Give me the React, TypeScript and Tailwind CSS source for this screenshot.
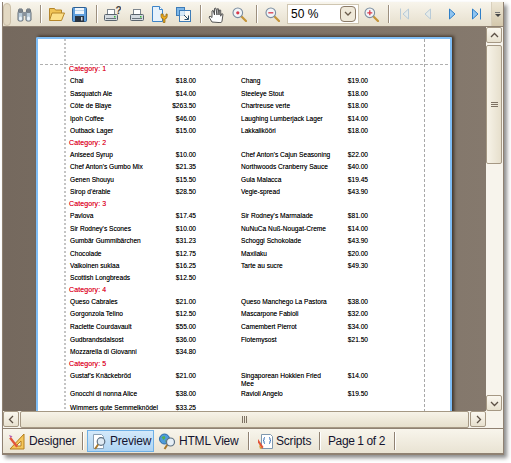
const font = { fontFamily: '"Liberation Sans", Arial, sans-serif' };

type Row = { top: number; a?: [string, string]; b?: [string, string]; cat?: string };

// row heights vary a little in the picture, so each row carries its own
const rows: Row[] = [
  { top: 12, cat: 'Category: 1' },
  { top: 13, a: ['Chai', '$18.00'], b: ['Chang', '$19.00'] },
  { top: 12, a: ['Sasquatch Ale', '$14.00'], b: ['Steeleye Stout', '$18.00'] },
  { top: 13, a: ['Côte de Blaye', '$263.50'], b: ['Chartreuse verte', '$18.00'] },
  { top: 12, a: ['Ipoh Coffee', '$46.00'], b: ['Laughing Lumberjack Lager', '$14.00'] },
  { top: 12, a: ['Outback Lager', '$15.00'], b: ['Lakkalikööri', '$18.00'] },
  { top: 12, cat: 'Category: 2' },
  { top: 12, a: ['Aniseed Syrup', '$10.00'], b: ["Chef Anton's Cajun Seasoning", '$22.00'] },
  { top: 13, a: ["Chef Anton's Gumbo Mix", '$21.35'], b: ['Northwoods Cranberry Sauce', '$40.00'] },
  { top: 12, a: ['Genen Shouyu', '$15.50'], b: ['Gula Malacca', '$19.45'] },
  { top: 12, a: ["Sirop d'érable", '$28.50'], b: ['Vegie-spread', '$43.90'] },
  { top: 12, cat: 'Category: 3' },
  { top: 13, a: ['Pavlova', '$17.45'], b: ["Sir Rodney's Marmalade", '$81.00'] },
  { top: 12, a: ["Sir Rodney's Scones", '$10.00'], b: ['NuNuCa Nuß-Nougat-Creme', '$14.00'] },
  { top: 13, a: ['Gumbär Gummibärchen', '$31.23'], b: ['Schoggi Schokolade', '$43.90'] },
  { top: 12, a: ['Chocolade', '$12.75'], b: ['Maxilaku', '$20.00'] },
  { top: 12, a: ['Valkoinen suklaa', '$16.25'], b: ['Tarte au sucre', '$49.30'] },
  { top: 12, a: ['Scottish Longbreads', '$12.50'] },
  { top: 12, cat: 'Category: 4' },
  { top: 12, a: ['Queso Cabrales', '$21.00'], b: ['Queso Manchego La Pastora', '$38.00'] },
  { top: 13, a: ['Gorgonzola Telino', '$12.50'], b: ['Mascarpone Fabioli', '$32.00'] },
  { top: 13, a: ['Raclette Courdavault', '$55.00'], b: ['Camembert Pierrot', '$34.00'] },
  { top: 12, a: ['Gudbrandsdalsost', '$36.00'], b: ['Flotemysost', '$21.50'] },
  { top: 12, a: ['Mozzarella di Giovanni', '$34.80'] },
  { top: 12, cat: 'Category: 5' },
  { top: 18, a: ["Gustaf's Knäckebröd", '$21.00'], b: ['Singaporean Hokkien Fried Mee', '$14.00'] },
  { top: 14, a: ['Gnocchi di nonna Alice', '$38.00'], b: ['Ravioli Angelo', '$19.50'] },
  { top: 12, a: ['Wimmers gute Semmelknödel', '$33.25'] },
];

function Sep() {
  return <div className="w-px h-[18px] mx-[4px] bg-[#9c8f7e] border-r border-white box-content shrink-0" />;
}

function Btn({ children, w = 26 }: { children: React.ReactNode; w?: number }) {
  return (
    <div className="flex items-center justify-center h-[22px] shrink-0" style={{ width: w }}>
      {children}
    </div>
  );
}

function Binoculars() {
  return (
    <svg width="15" height="15" viewBox="0 0 15 15">
      <path d="M1 13V6l1-4h3l1 4v7a1.500 1.500 0 0 1-1.500 1h-2A1.500 1.500 0 0 1 1 13z" fill="#b9cbd9" stroke="#626c76" />
      <path d="M9 13V6l1-4h3l1 4v7a1.500 1.500 0 0 1-1.500 1h-2A1.500 1.500 0 0 1 9 13z" fill="#b9cbd9" stroke="#626c76" />
      <rect x="2" y="2" width="3" height="4" fill="#7a838c" />
      <rect x="10" y="2" width="3" height="4" fill="#7a838c" />
      <rect x="6" y="5" width="3" height="4" fill="#8a939c" />
      <ellipse cx="3.500" cy="11.500" rx="1.500" ry="2" fill="#eaf3fa" />
      <ellipse cx="11.500" cy="11.500" rx="1.500" ry="2" fill="#eaf3fa" />
    </svg>
  );
}

function Folder() {
  return (
    <svg width="17" height="15" viewBox="0 0 17 15">
      <path d="M1.500 13V1.500h5l1 1.500h6V6" fill="#f0c355" stroke="#b5862a" />
      <path d="M1.500 13.500L4 6h12.500l-3 7.500z" fill="#fce08a" stroke="#b5862a" />
    </svg>
  );
}

function Floppy() {
  return (
    <svg width="15" height="15" viewBox="0 0 15 15">
      <rect x=".500" y=".500" width="14" height="14" rx="1" fill="#5f9fdc" stroke="#2d5f93" />
      <rect x="3" y="1" width="9" height="6" fill="#eef5fb" />
      <rect x="3" y="3" width="9" height="1" fill="#b9d4ea" />
      <rect x="3" y="9" width="9" height="6" fill="#2a3440" />
      <rect x="9" y="10" width="1.500" height="3.500" fill="#cfd8df" />
    </svg>
  );
}

function Printer({ q }: { q?: boolean }) {
  return (
    <svg width={q ? 17 : 14} height="16" viewBox={q ? '0 0 17 16' : '0 0 14 16'}>
      <rect x="3.500" y="3.500" width="7" height="6" fill="#fff" stroke="#7d868e" />
      <rect x=".500" y="8.500" width="13" height="6" rx="1" fill="#d5dbe0" stroke="#59636c" />
      <rect x="2" y="12" width="10" height="1" fill="#6a747d" />
      <rect x="10" y="10" width="1.500" height="1.500" fill="#35b935" />
      {q && <text x="11.500" y="8" fontSize="10" fontWeight="700" fill="#444" style={font}>?</text>}
    </svg>
  );
}

function PageSetup() {
  return (
    <svg width="17" height="17" viewBox="0 0 17 17">
      <path d="M.500 .500h7l3 3v12h-10z" fill="#e6f2fc" stroke="#3e84c8" />
      <path d="M7.500 .500v3h3" fill="#fff" stroke="#3e84c8" />
      <path d="M9 8v2.500a2.500 2.500 0 0 0 2.200 2.400V16.500h1.800v-3.600a2.500 2.500 0 0 0 2.200-2.400V8h-1.200v2.200h-2.800V8z" fill="#eeaa1c" stroke="#8c6410" strokeWidth=".7" />
    </svg>
  );
}

function Export() {
  return (
    <svg width="15" height="15" viewBox="0 0 15 15">
      <rect x=".500" y=".500" width="8" height="8" fill="#7db7e8" stroke="#3e7cb8" />
      <rect x="3.500" y="3.500" width="11" height="11" fill="#fff" fillOpacity=".7" stroke="#3e7cb8" />
      <path d="M8 8l4 4M12.500 8.500v4H8.500" fill="none" stroke="#2b4b66" />
    </svg>
  );
}

function Hand() {
  return (
    <svg width="17" height="17" viewBox="0 0 17 17">
      <path
        d="M4 16l-3-5 1-1 2 1.500V5l1.200-.6L6.500 9V2.500l1.300-.5L9 9V3l1.300-.3.7 6.300.4-5 1.300.2v6l1-2.500 1.300.5-1 7-1 1.500z"
        fill="#fff"
        stroke="#444"
        strokeWidth=".9"
      />
    </svg>
  );
}

function Zoom({ sign }: { sign?: 'plus' | 'minus' | 'dot' }) {
  return (
    <svg width="15" height="15" viewBox="0 0 15 15">
      <path d="M9.500 9.500l4.500 4.500" stroke="#c49438" strokeWidth="2.200" strokeLinecap="round" />
      <circle cx="5.800" cy="5.800" r="4.800" fill="#f1f5f8" stroke="#7b8da0" strokeWidth="1.100" />
      {sign === 'dot' && <circle cx="5.800" cy="5.800" r="1.600" fill="#d93a4a" />}
      {sign === 'minus' && <path d="M3.300 5.800h5" stroke="#d93a4a" strokeWidth="1.300" />}
      {sign === 'plus' && <path d="M3.300 5.800h5M5.800 3.300v5" stroke="#d93a4a" strokeWidth="1.300" />}
    </svg>
  );
}

function Nav({ dir, bar, dim }: { dir: 'l' | 'r'; bar?: boolean; dim?: boolean }) {
  const stroke = dim ? '#b8cbd8' : '#2f7fc8';
  const fill = dim ? '#e6ebe8' : '#8fc4f0';
  return (
    <svg width="10" height="12" viewBox="0 0 10 12">
      {dir === 'l' ? (
        <>
          <path d="M8.500 1v10L3 6z" fill={fill} stroke={stroke} />
          {bar && <path d="M.500 .500v11" stroke={stroke} />}
        </>
      ) : (
        <>
          <path d="M1.500 1v10L7 6z" fill={fill} stroke={stroke} />
          {bar && <path d="M9.500 .500v11" stroke={stroke} />}
        </>
      )}
    </svg>
  );
}

function Toolbar() {
  return (
    <div className="flex items-center h-[25px] bg-gradient-to-b from-[#f8f5ec] to-[#e6dfcd] border-b border-[#8f8172]">
      <div className="w-[8px] h-[23px] mr-px rounded-sm border border-[#cbbfa8] bg-[#e3d9c3] shrink-0" />
      <Btn w={24}><Binoculars /></Btn>
      <Sep />
      <Btn w={20}><Folder /></Btn>
      <Btn w={26}><Floppy /></Btn>
      <Sep />
      <Btn w={20}><Printer q /></Btn>
      <Btn w={29}><Printer /></Btn>
      <Btn w={19}><PageSetup /></Btn>
      <Btn w={26}><Export /></Btn>
      <Sep />
      <Btn w={20}><Hand /></Btn>
      <Btn w={26}><Zoom sign="dot" /></Btn>
      <Sep />
      <Btn w={21}><Zoom sign="minus" /></Btn>
      <div className="ml-[4px] w-[72px] h-[20px] flex items-center justify-between bg-white border border-[#cfc6b2] pl-[3px] pr-[2px] shrink-0">
        <span className="text-[12px] text-black" style={font}>50 %</span>
        <div className="w-[16px] h-[16px] rounded-sm border border-[#8a7a68] bg-[#efe9da] flex items-center justify-center">
          <svg width="8" height="6" viewBox="0 0 8 6"><path d="M1 1l3 3 3-3" fill="none" stroke="#6b5c4c" strokeWidth="1.300" /></svg>
        </div>
      </div>
      <Btn w={25}><Zoom sign="plus" /></Btn>
      <Sep />
      <Btn w={21}><Nav dir="l" bar dim /></Btn>
      <Btn w={24}><Nav dir="l" dim /></Btn>
      <Btn w={28}><Nav dir="r" /></Btn>
      <Btn w={18}><Nav dir="r" bar /></Btn>
      <div className="ml-auto w-[12px] h-[24px] bg-gradient-to-b from-[#eee7d6] to-[#d4c8ac] flex flex-col items-center justify-center gap-px border-l border-[#d8cfbc]">
        <div className="w-[5px] h-px bg-[#777]" />
        <div className="w-0 h-0 border-x-[3px] border-x-transparent border-t-[3px] border-t-[#444]" />
      </div>
    </div>
  );
}

function ReportPage() {
  return (
    <div className="relative w-[416px] h-[380px] overflow-hidden bg-white border-2 border-b-0 border-[#7fbdf5] rounded-t-[2px] text-[6.600px] leading-[8px] text-black [text-shadow:0_0_0.4px_rgba(0,0,0,0.55)]">
      {/* margin guides */}
      <div className="absolute left-[26px] top-0 bottom-0 border-l-2 border-dotted border-[#c4c4c4]" />
      <div className="absolute left-[386px] top-0 bottom-0 border-l border-dashed border-[#a8a8a8]" />
      <div className="absolute left-[2px] right-[2px] top-[25px] border-t border-dashed border-[#b0b0b0]" />
      <div className="pt-[24px] pl-[31px]" style={font}>
        {rows.map((r, i) =>
          r.cat ? (
            <div key={i} className="h-[12px] text-[#e0001a] text-[7px] tracking-[0.1px] flex items-center [text-shadow:0_0_0.4px_rgba(200,0,40,0.6)]">{r.cat}</div>
          ) : (
            <div key={i} className="flex items-start pl-[1px] pt-[2px]" style={{ height: r.top }}>
              <div className="w-[126px] flex">
                <span className="w-[90px] shrink-0 whitespace-nowrap">{r.a?.[0]}</span>
                <span className="w-[36px] text-right">{r.a?.[1]}</span>
              </div>
              <div className="ml-[45px] w-[127px] flex">
                <span className="w-[92px] shrink-0">{r.b?.[0]}</span>
                <span className="w-[35px] text-right">{r.b?.[1]}</span>
              </div>
            </div>
          )
        )}
      </div>
    </div>
  );
}

function ScrollBtn({ children }: { children: React.ReactNode }) {
  return (
    <div className="w-[16px] h-[16px] shrink-0 rounded-[2px] border border-[#a59884] bg-gradient-to-b from-[#faf7ef] to-[#e8e1cf] flex items-center justify-center">
      {children}
    </div>
  );
}

function Chevron({ d }: { d: string }) {
  return (
    <svg width="9" height="9" viewBox="0 0 9 9">
      <path d={d} fill="none" stroke="#5c5045" strokeWidth="1.300" />
    </svg>
  );
}

function VScroll() {
  return (
    <div className="w-[17px] shrink-0 flex flex-col bg-[#f7f4ec]">
      <ScrollBtn><Chevron d="M1 6l3.500-3.500L8 6" /></ScrollBtn>
      <div className="mt-[2px] h-[119px] w-[16px] rounded-[2px] border border-[#a59884] bg-gradient-to-r from-[#f7f3e8] to-[#e6dfcc] flex items-center justify-center">
        <div className="w-[7px] h-[5px] border-y border-[#7d7163] flex items-center"><div className="w-full h-px bg-[#7d7163]" /></div>
      </div>
      <div className="flex-1" />
      <ScrollBtn><Chevron d="M1 3l3.500 3.500L8 3" /></ScrollBtn>
    </div>
  );
}

function HScroll() {
  return (
    <div className="flex h-[17px] bg-[#f7f4ec] pr-[17px]">
      <ScrollBtn><Chevron d="M6 1L2.500 4.500 6 8" /></ScrollBtn>
      <div className="flex-1 mx-[1px] rounded-[2px] border border-[#a59884] bg-gradient-to-b from-[#f7f3e8] to-[#e6dfcc] flex items-center justify-center">
        <div className="w-[5px] h-[7px] border-x border-[#7d7163] flex justify-center"><div className="h-full w-px bg-[#7d7163]" /></div>
      </div>
      <ScrollBtn><Chevron d="M3 1l3.500 3.500L3 8" /></ScrollBtn>
    </div>
  );
}

function TabSep() {
  return <div className="w-px h-[18px] bg-[#8f8172] border-r border-white box-content shrink-0" />;
}

function DesignerIcon() {
  return (
    <svg width="16" height="17" viewBox="0 0 16 17" className="shrink-0">
      <path d="M15 1v15H1z" fill="#f4c65a" stroke="#b57e1c" />
      <path d="M12 8v5H7z" fill="#f8f4e8" stroke="#b57e1c" />
      <path d="M2 4l7 9-1.800 1.500-7-9z" fill="#e2553a" />
      <path d="M0 2l3.500 1.200L1.500 5z" fill="#b35fb0" />
    </svg>
  );
}

function PreviewIcon() {
  return (
    <svg width="16" height="17" viewBox="0 0 16 17" className="shrink-0">
      <path d="M2.500 1.500h8l2 2v12h-10z" fill="#fff" stroke="#8aa0b4" />
      <path d="M7.500 11l-3.500 5" stroke="#a9792c" strokeWidth="2" />
      <circle cx="10" cy="8.500" r="3.800" fill="#dfeaf3" stroke="#5e7183" strokeWidth="1.200" />
    </svg>
  );
}

function HtmlIcon() {
  return (
    <svg width="17" height="17" viewBox="0 0 17 17" className="shrink-0">
      <circle cx="5.500" cy="6" r="5" fill="#4f9bdc" stroke="#2c6aa5" />
      <path d="M2.500 4l3-1 1 2-2 2zM6.500 7l2 1-1 2-1-1z" fill="#55b04a" />
      <path d="M8.500 11.500l-3 4.500" stroke="#a9792c" strokeWidth="2" />
      <circle cx="11.500" cy="9" r="4" fill="#e6eff6" stroke="#5e7183" strokeWidth="1.200" />
    </svg>
  );
}

function ScriptsIcon() {
  return (
    <svg width="15" height="17" viewBox="0 0 15 17" className="shrink-0">
      <path d="M3.500 1.500h9l2 2v12h-11z" fill="#fff" stroke="#7f98ae" />
      <path d="M7 4.500c-1 0-1 1-1 2s-1 1-1 1 1 0 1 1 0 2 1 2M11 4.500c1 0 1 1 1 2s1 1 1 1-1 0-1 1 0 2-1 2" fill="none" stroke="#2060b0" />
      <path d="M0 6l5.500 8-1.500 2L-1 8z" fill="#e2553a" />
      <path d="M1 12l3 3-2 1z" fill="#d9a02c" />
    </svg>
  );
}

function Tabs() {
  return (
    <div className="flex items-center h-[26px] text-[12px] tracking-[-0.2px] text-[#14142e] bg-gradient-to-b from-[#f8f5ec] to-[#e9e3d3] border-y border-[#8f8172]" style={font}>
      <div className="flex items-center gap-[4px] pl-[6px] w-[79px] shrink-0">
        <DesignerIcon />
        <span>Designer</span>
      </div>
      <TabSep />
      <div className="ml-[3px] flex items-center gap-[3px] w-[67px] h-[22px] pl-[3px] bg-gradient-to-b from-[#d4e9fa] to-[#aed4f3] border border-[#6fb0e6] shrink-0">
        <PreviewIcon />
        <span>Preview</span>
      </div>
      <div className="flex items-center gap-[3px] pl-[5px] w-[94px] shrink-0">
        <HtmlIcon />
        <span>HTML View</span>
      </div>
      <TabSep />
      <div className="flex items-center gap-[3px] pl-[8px] w-[69px] shrink-0">
        <ScriptsIcon />
        <span>Scripts</span>
      </div>
      <TabSep />
      <div className="pl-[7px] w-[73px] tracking-[-0.4px] shrink-0">Page 1 of 2</div>
      <TabSep />
    </div>
  );
}

export default function App() {
  return (
    <div className="w-[511px] h-[463px] bg-white pt-[2px] pl-[2px]">
      <div className="w-[502px] h-[453px] flex flex-col border-x border-b border-[#8f8172] shadow-[3px_3px_4px_rgba(0,0,0,0.45)] bg-[#f7f4ec]">
        <Toolbar />
        <div className="flex h-[384px]">
          <div className="flex-1 min-w-0 bg-gradient-to-r from-[#75695e] to-[#85796d] pl-[33px] pt-[10px] overflow-hidden">
            <div className="w-[416px] shadow-[2px_-1px_3px_rgba(40,30,20,0.75)]">
              <ReportPage />
            </div>
          </div>
          <VScroll />
        </div>
        <HScroll />
        <Tabs />
      </div>
    </div>
  );
}
